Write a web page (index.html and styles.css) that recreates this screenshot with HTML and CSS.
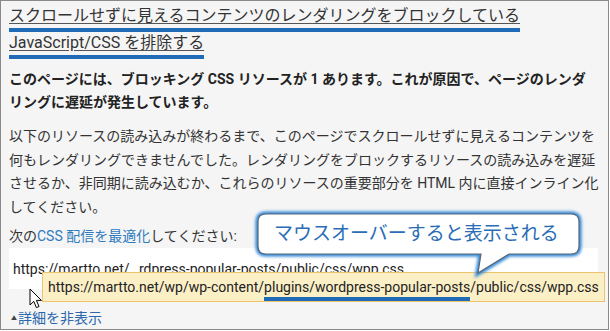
FILE: index.html
```html
<!DOCTYPE html>
<html>

<head>
    <meta charset="UTF-8">
    <title>レンダリングをブロックしているリソース</title>
    <link rel="stylesheet" href="styles.css">
</head>

<body>
    <div class="frame">
        <h1 class="title"><span class="mark">スクロールせずに見えるコンテンツのレンダリングをブロックしている<br>JavaScript/CSS を排除する</span></h1>
        <p class="lead">このページには、ブロッキング CSS リソースが 1 あります。これが原因で、ページのレンダ<br>リングに遅延が発生しています。</p>
        <p class="desc">以下のリソースの読み込みが終わるまで、このページでスクロールせずに見えるコンテンツを<br>何もレンダリングできませんでした。レンダリングをブロックするリソースの読み込みを遅延<br>させるか、非同期に読み込むか、これらのリソースの重要部分を HTML 内に直接インライン化<br>してください。</p>
        <p class="next">次の<a class="link">CSS 配信を最適化</a>してください:</p>
        <div class="urlbox">
            <div class="url">https://martto.net/…rdpress-popular-posts/public/css/wpp.css</div>
            <div class="tooltip">https://martto.net/wp/wp-content/<span class="mark-sm">plugins/wordpress-popular-posts</span>/public/css/wpp.css</div>
            <svg class="cursor" width="14" height="22" viewBox="0 0 14 22">
                <path d="M1 1 L1 17 L4.8 13.4 L7.4 19.6 L10 18.5 L7.4 12.4 L12.4 12.4 Z" fill="#fff" stroke="#000" stroke-width="1" stroke-linejoin="round"/>
            </svg>
        </div>
        <a class="toggle"><span class="arrow">▲</span>詳細を非表示</a>

        <!-- 注釈の吹き出し -->
        <div class="callout">
            <svg class="callout-bg" width="340" height="80" viewBox="0 0 340 80">
                <defs>
                    <filter id="glow" x="-10%" y="-30%" width="120%" height="160%">
                        <feGaussianBlur stdDeviation="1.6"/>
                    </filter>
                </defs>
                <path d="M15 7 H320 Q328 7 328 15 V39 Q328 47 320 47 H258 L227 66 L230 47 H15 Q7 47 7 39 V15 Q7 7 15 7 Z" fill="none" stroke="#2f86d6" stroke-width="5" filter="url(#glow)"/>
                <path d="M15 7 H320 Q328 7 328 15 V39 Q328 47 320 47 H258 L227 66 L230 47 H15 Q7 47 7 39 V15 Q7 7 15 7 Z" fill="#fff" stroke="#5b6677" stroke-width="1.2"/>
            </svg>
            <span class="callout-text">マウスオーバーすると表示される</span>
        </div>
    </div>
</body>

</html>
```

FILE: styles.css
```css
body,
h1,
p {
    margin: 0;
    padding: 0;
}

body {
    font-family: Roboto, "Noto Sans CJK JP", sans-serif;
    color: #333;
    background-color: #fff;
}

.frame {
    position: relative;
    box-sizing: border-box;
    width: 609px;
    height: 330px;
    border: 1px solid #8a8a8a;
    background-color: #f5f5f5;
    padding: 1px 10px 0 8px;
    overflow: hidden;
}

.title {
    font-size: 16px;
    font-weight: normal;
    line-height: 27px;
    color: #333;
    white-space: nowrap;
}

.title .mark {
    text-decoration: underline;
    text-decoration-color: #555;
    text-underline-offset: 2px;
    padding-bottom: 3px;
    border-bottom: 4px solid #1f6bb8;
}

.lead {
    margin-top: 12px;
    font-size: 14px;
    font-weight: bold;
    line-height: 23px;
    color: #222;
    white-space: nowrap;
}

.desc {
    margin-top: 11px;
    font-size: 14px;
    line-height: 23.5px;
    white-space: nowrap;
}

.next {
    margin-top: 5px;
    font-size: 14px;
    line-height: 24px;
}

.link {
    color: #2f7bbf;
}

.urlbox {
    position: relative;
    height: 41px;
    background-color: #fff;
}

.url {
    padding: 11px 0 0 4px;
    font-size: 14px;
    line-height: 20px;
    color: #222;
    white-space: nowrap;
}

.tooltip {
    position: absolute;
    left: 33px;
    top: 24px;
    box-sizing: border-box;
    width: 563px;
    height: 30px;
    padding: 4px 5px 0;
    background-color: #fbefc6;
    border: 1px solid #efc36e;
    font-size: 14px;
    line-height: 20px;
    color: #222;
    white-space: nowrap;
}

.tooltip .mark-sm {
    padding-bottom: 2px;
    border-bottom: 4px solid #1f6bb8;
}

.cursor {
    position: absolute;
    left: 20px;
    top: 40px;
}

.toggle {
    display: block;
    margin-top: 19px;
    padding-left: 2px;
    font-size: 14px;
    line-height: 20px;
    color: #2a67ad;
}

.toggle .arrow {
    display: inline-block;
    font-size: 6px;
    color: #444;
    vertical-align: 3px;
    margin-right: 1px;
}

.callout {
    position: absolute;
    left: 257px;
    top: 213px;
    width: 321px;
    height: 40px;
}

.callout-bg {
    position: absolute;
    left: -7px;
    top: -7px;
}

.callout-text {
    position: relative;
    display: block;
    padding-left: 16px;
    font-size: 19px;
    line-height: 40px;
    color: #2a6db5;
    white-space: nowrap;
}
```
